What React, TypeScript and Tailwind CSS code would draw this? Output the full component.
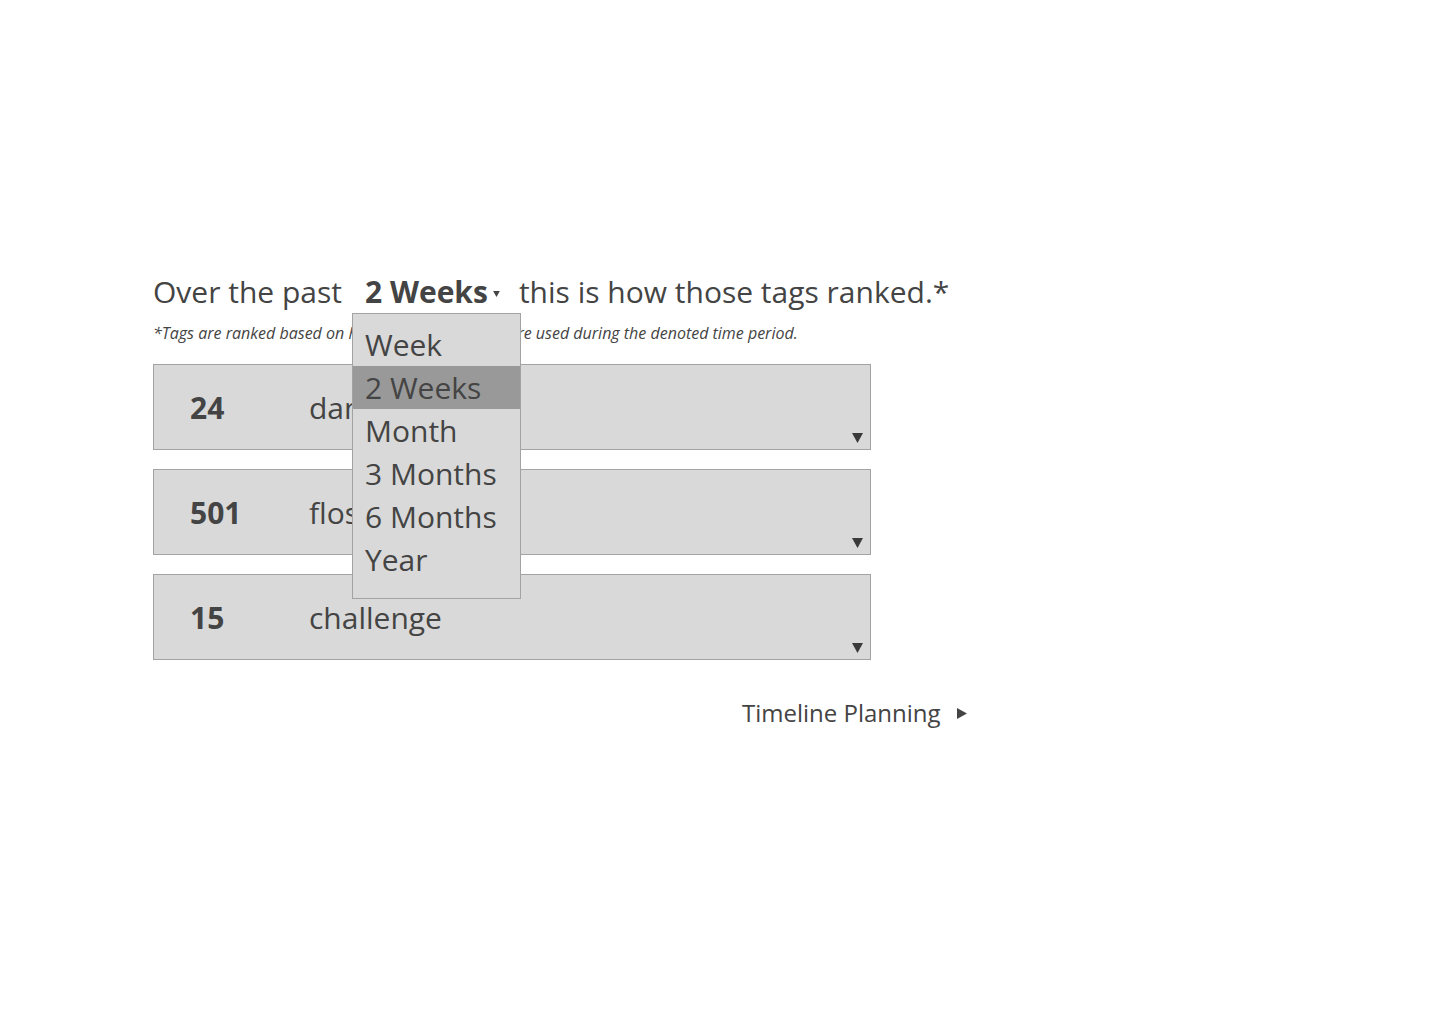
import { useState } from 'react';

const periods = ['Week', '2 Weeks', 'Month', '3 Months', '6 Months', 'Year'];

const tags = [
    { count: 24, name: 'dancing' },
    { count: 501, name: 'flossing' },
    { count: 15, name: 'challenge' },
];

function Caret({ className }: { className?: string }) {
    return (
        <svg className={className} viewBox="0 0 10 9" fill="currentColor">
            <path d="M0 0h10L5 9z" />
        </svg>
    );
}

export default function App() {
    const [period, setPeriod] = useState('2 Weeks');
    const [open, setOpen] = useState(true);

    return (
        <div className="min-h-screen bg-white text-[#444] font-['Open_Sans',sans-serif]">
            <div className="pl-[153px] pt-[272px]">
                <div className="flex items-center h-[40px] text-[30px] leading-[40px] whitespace-nowrap">
                    <span>Over the past</span>
                    <div className="relative ml-[23px]">
                        <button
                            onClick={() => setOpen(!open)}
                            className="flex items-center font-bold focus:outline-none"
                        >
                            {period}
                            <Caret className="ml-[5px] mt-[3px] w-[7px] h-[6px]" />
                        </button>
                        {open && (
                            <div className="absolute left-[-13px] top-[41px] w-[169px] pt-[9px] pb-[17px] bg-[#d9d9d9] border border-[#a3a3a3] z-10">
                                {periods.map((p) => (
                                    <div
                                        key={p}
                                        onClick={() => {
                                            setPeriod(p);
                                            setOpen(false);
                                        }}
                                        className={`h-[43px] leading-[43px] pl-[12px] text-[30px] cursor-pointer ${p === period ? 'bg-[#999999]' : ''}`}
                                    >
                                        {p}
                                    </div>
                                ))}
                            </div>
                        )}
                    </div>
                    <span className="ml-[19px]">this is how those tags ranked.*</span>
                </div>
                <p className="mt-[10px] text-[16px] leading-[22px] italic">
                    *Tags are ranked based on how often these tags were used during the denoted time period.
                </p>

                <div className="mt-[20px] flex flex-col gap-[19px] w-[718px]">
                    {tags.map((t) => (
                        <div
                            key={t.name}
                            className="relative flex items-center h-[86px] bg-[#d9d9d9] border border-[#a3a3a3] text-[30px]"
                        >
                            <span className="w-[155px] pl-[36px] font-bold">{t.count}</span>
                            <span>{t.name}</span>
                            <Caret className="absolute right-[7px] bottom-[6px] w-[11px] h-[10px] text-[#3a3a3a]" />
                        </div>
                    ))}
                </div>

                <div className="mt-[37px] ml-[589px] flex items-center text-[24px] leading-[32px]">
                    <span>Timeline Planning</span>
                    <svg className="ml-[16px] w-[10px] h-[11px]" viewBox="0 0 10 11" fill="currentColor">
                        <path d="M0 0l10 5.5L0 11z" />
                    </svg>
                </div>
            </div>
        </div>
    );
}
